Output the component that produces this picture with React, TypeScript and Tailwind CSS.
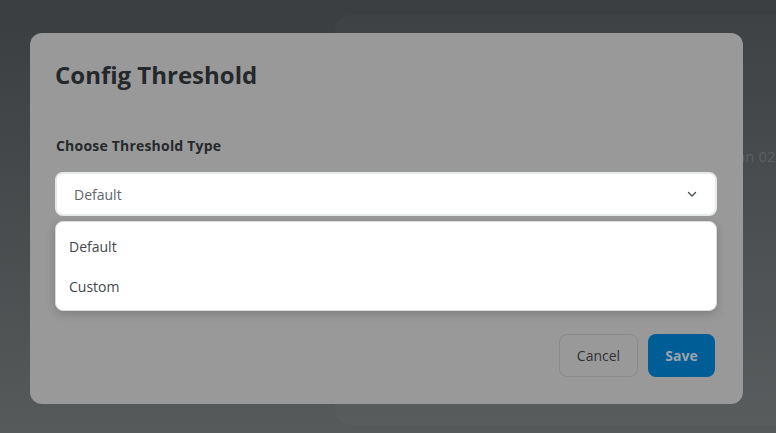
import React from 'react';

const ChevronDown = () => (
  <svg width="12" height="12" viewBox="0 0 12 12" fill="none">
    <path d="M2.5 4.5L6 8L9.5 4.5" stroke="#4b5257" strokeWidth="1.4" strokeLinecap="round" strokeLinejoin="round" />
  </svg>
);

const App = () => {
  const options = ['Default', 'Custom'];

  return (
    <div
      className="relative w-[776px] h-[433px] overflow-hidden bg-gradient-to-b from-[#3b3e40] to-[#575a5b]"
      style={{ fontFamily: '"Open Sans", "Noto Sans", sans-serif' }}
    >
      {/* page behind the overlay */}
      <div className="flex h-full pt-[15px] pb-[8px]">
        <div className="w-[335px] shrink-0" />
        <div className="flex-1 rounded-l-[16px] bg-[#ffffff05] pt-[129px] pl-[398px]">
          <span className="text-[15px] text-[#5b5f61] whitespace-nowrap">Jan 02</span>
        </div>
      </div>

      {/* modal */}
      <div className="absolute left-[30px] top-[33px] w-[713px] h-[371px] rounded-[12px] bg-[#999999] pl-[25px] pr-[26px] pt-[27px] flex flex-col">
        <h2 className="text-[24px] font-bold leading-[30px] text-[#24282b]">Config Threshold</h2>
        <label className="mt-[46px] ml-[1px] text-[14px] font-bold leading-[20px] text-[#25292c] tracking-[0.2px]">
          Choose Threshold Type
        </label>

        <div className="relative mt-[16px]">
          <div className="flex h-[44px] items-center justify-between rounded-[8px] border-2 border-[#e7eaea] bg-white pl-[17px] pr-[17px]">
            <span className="text-[14px] text-[#5d666b]">Default</span>
            <ChevronDown />
          </div>
          <div className="absolute left-0 right-0 top-[49px] z-10 rounded-[8px] border border-[#d9dcdd] bg-white py-[4px] shadow-[0_3px_10px_rgba(0,0,0,0.18)]">
            {options.map((opt) => (
              <div key={opt} className="flex h-[40px] items-center pl-[13px] text-[14px] text-[#3f474c]">
                {opt}
              </div>
            ))}
          </div>
        </div>

        <div className="mt-auto mb-[27px] mr-[2px] flex justify-end gap-[10px]">
          <button className="h-[43px] w-[79px] rounded-[8px] border border-[#8a8a8a] text-[14px] text-[#2f3336]">
            Cancel
          </button>
          <button className="h-[43px] w-[67px] rounded-[8px] bg-[#005d95] text-[14px] font-bold text-[#9aa5ae]">
            Save
          </button>
        </div>
      </div>
    </div>
  );
};

export default App;
